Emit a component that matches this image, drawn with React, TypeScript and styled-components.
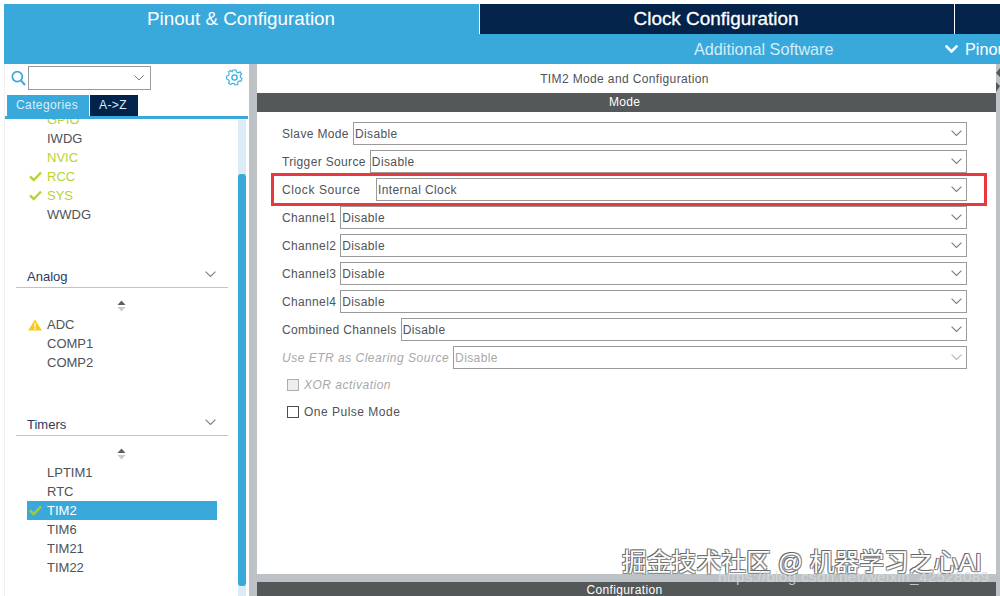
import React from 'react';
import styled, { createGlobalStyle } from 'styled-components';

const GlobalStyle = createGlobalStyle`
  html, body {
    margin: 0;
    padding: 0;
    background: #fff;
  }
  body {
    font-family: "Liberation Sans", Arial, sans-serif;
    overflow: hidden;
  }
`;

const Page = styled.div`
  position: relative;
  width: 1000px;
  height: 596px;
  overflow: hidden;
  padding: 4px 0 0 4px;
  box-sizing: border-box;
  display: flex;
  flex-direction: column;
`;

const TopTabs = styled.div`
  display: flex;
  height: 30px;
  flex: none;
`;

const TopTab = styled.div<{ $active?: boolean; $width: number }>`
  width: ${(p) => p.$width}px;
  flex: none;
  box-sizing: border-box;
  background: ${(p) => (p.$active ? '#39a9dc' : '#03234b')};
  color: #fff;
  border-left: ${(p) => (p.$active ? '0' : '1px solid #fff')};
  font-size: ${(p) => (p.$active ? 18.8 : 18.9)}px;
  line-height: 30px;
  text-align: center;
  white-space: nowrap;
  padding-right: ${(p) => (p.$active ? 1 : 2)}px;
  -webkit-text-stroke: ${(p) => (p.$active ? '0' : '0.3px #fff')};
`;

const SubBar = styled.div`
  height: 30px;
  flex: none;
  background: #39a9dc;
  color: #d4edf8;
  display: flex;
  align-items: center;
  font-size: 16.2px;
  white-space: nowrap;
  overflow: hidden;
`;

const SubItem = styled.div`
  margin-left: 690px;
  width: 251px;
  flex: none;
`;

const PinoutMenu = styled.div`
  display: flex;
  align-items: center;
  gap: 7px;
  color: #fff;
  flex: none;
`;

const Body = styled.div`
  flex: 1;
  display: flex;
  min-height: 0;
`;

const Sidebar = styled.div`
  width: 245px;
  flex: none;
  display: flex;
  flex-direction: column;
  box-sizing: border-box;
  border-left: 1px solid #eef0f1;
`;

const SearchRow = styled.div`
  height: 31px;
  flex: none;
  display: flex;
  align-items: flex-start;
  padding: 2px 6px 0 6px;
  box-sizing: border-box;
`;

const SearchIconSlot = styled.span`
  margin-top: 4px;
  display: flex;
`;

const GearSlot = styled.span`
  margin-top: 3px;
  display: flex;
`;

const SearchBox = styled.div`
  width: 123px;
  height: 24px;
  margin-left: 2px;
  box-sizing: border-box;
  border: 1px solid #9a9a9a;
  display: flex;
  align-items: center;
  justify-content: flex-end;
  padding-right: 6px;
  margin-right: auto;
`;

const CategoryTabs = styled.div`
  display: flex;
  gap: 1px;
  padding-left: 2px;
  height: 21px;
  flex: none;
`;

const CategoryTab = styled.div<{ $active?: boolean }>`
  padding: 0 11px 0 9px;
  background: ${(p) => (p.$active ? '#39a9dc' : '#03234b')};
  color: #d9eef8;
  font-size: 12px;
  line-height: 21px;
  letter-spacing: 0.4px;
`;

const BlueRule = styled.div`
  height: 3px;
  flex: none;
  margin-right: 1px;
  background: #39a9dc;
`;

const ListArea = styled.div`
  flex: 1;
  position: relative;
  display: flex;
  min-height: 0;
  overflow: hidden;
`;

const ListColumn = styled.div`
  flex: 1;
  min-width: 0;
  padding: 0 0 0 11px;
  margin-top: -9px;
`;

const ScrollTrack = styled.div`
  width: 8px;
  flex: none;
  margin: 1px 3px 0 0;
  background: #dcecf6;
  padding-top: 54px;
  box-sizing: border-box;
`;

const ScrollThumb = styled.div`
  height: 412px;
  border-radius: 3px;
  background: #39a9dc;
`;

const ItemList = styled.div<{ $gapAfter?: number }>`
  padding-left: 11px;
  margin-bottom: ${(p) => p.$gapAfter ?? 0}px;
`;

const Item = styled.div<{ $tone?: 'lime' | 'selected' }>`
  height: 19px;
  width: 190px;
  display: flex;
  align-items: center;
  font-size: 13px;
  background: ${(p) => (p.$tone === 'selected' ? '#39a9dc' : 'transparent')};
  color: ${(p) =>
    p.$tone === 'lime' ? '#b8d432' : p.$tone === 'selected' ? '#fff' : '#4f5257'};
`;

const ItemIcon = styled.span`
  width: 20px;
  flex: none;
  display: flex;
  justify-content: flex-end;
  padding-right: 5px;
  box-sizing: border-box;
`;

const GroupHeader = styled.div`
  width: 212px;
  height: 22px;
  box-sizing: border-box;
  border-bottom: 1px solid #c0c4c7;
  padding: 0 12px 0 11px;
  display: flex;
  align-items: center;
  justify-content: space-between;
  color: #2c3a5c;
  font-size: 13px;
`;

const GroupChevron = styled.span`
  display: flex;
  margin-bottom: 4px;
`;

const Sorter = styled.div`
  width: 188px;
  margin: 12px 0 3px 11px;
  height: 12px;
  display: flex;
  justify-content: center;
`;

const Divider = styled.div`
  width: 8px;
  flex: none;
  background: #bcc2c6;
`;

const Main = styled.div`
  flex: 1;
  display: flex;
  flex-direction: column;
  min-width: 0;
`;

const MainTitle = styled.div`
  height: 29px;
  flex: none;
  font-size: 12px;
  letter-spacing: 0.37px;
  padding: 1px 4px 0 0;
  box-sizing: border-box;
  color: #4f5257;
  text-align: center;
  line-height: 28px;
`;

const DarkBar = styled.div`
  height: 19px;
  flex: none;
  background: #555859;
  color: #fff;
  font-size: 12px;
  letter-spacing: 0.3px;
  line-height: 19px;
  text-align: center;
  padding-right: 4px;
`;

const Form = styled.div`
  flex: 1;
  padding: 10px 29px 0 25px;
  display: flex;
  flex-direction: column;
  gap: 5px;
  min-height: 0;
`;

const Row = styled.div<{ $disabled?: boolean }>`
  height: 23px;
  flex: none;
  display: flex;
  align-items: center;
  font-size: 12px;
  color: ${(p) => (p.$disabled ? '#a8a8a8' : '#4f5257')};
  font-style: ${(p) => (p.$disabled ? 'italic' : 'normal')};
  white-space: nowrap;
`;

const Label = styled.span<{ $width?: number; $spacing?: number }>`
  flex: none;
  width: ${(p) => (p.$width ? `${p.$width}px` : 'auto')};
  margin-right: 4px;
  letter-spacing: ${(p) => p.$spacing ?? 0.35}px;
`;

const SelectBox = styled.div<{ $disabled?: boolean }>`
  flex: 1;
  height: 23px;
  box-sizing: border-box;
  border: 1px solid #9a9a9a;
  display: flex;
  align-items: center;
  justify-content: space-between;
  padding: 0 4px 0 1px;
  font-style: normal;
  letter-spacing: 0.4px;
  color: ${(p) => (p.$disabled ? '#a8a8a8' : '#4f5257')};
`;

const CheckRow = styled.div<{ $disabled?: boolean }>`
  height: 22px;
  flex: none;
  display: flex;
  align-items: center;
  gap: 5px;
  padding-left: 5px;
  font-size: 12px;
  letter-spacing: 0.5px;
  color: ${(p) => (p.$disabled ? '#a8a8a8' : '#4f5257')};
  font-style: ${(p) => (p.$disabled ? 'italic' : 'normal')};
`;

const CheckBox = styled.span<{ $disabled?: boolean }>`
  width: 12px;
  height: 12px;
  box-sizing: border-box;
  flex: none;
  border: 1px solid ${(p) => (p.$disabled ? '#adadad' : '#4a4a4a')};
  background: ${(p) => (p.$disabled ? '#eeeeee' : '#fff')};
`;

const ConfigStrip = styled.div`
  flex: none;
  background: #bcc2c6;
  padding-top: 8px;
`;

const ConfigBar = styled(DarkBar)`
  height: 14px;
  line-height: 17px;
  letter-spacing: 0.35px;
`;

const EdgeBar = styled.div`
  width: 4px;
  flex: none;
  background: #bcc2c6;
  position: relative;
`;

const EdgeArrows = styled.svg`
  position: absolute;
  left: 0;
  top: 4px;
`;

const Highlight = styled.div`
  position: absolute;
  left: 271px;
  top: 173px;
  width: 716px;
  height: 33px;
  box-sizing: border-box;
  border: 3px solid #e8383d;
  pointer-events: none;
`;

const WatermarkMain = styled.div`
  position: absolute;
  left: 622px;
  top: 548px;
  font-size: 24.8px;
  line-height: 30px;
  color: #fff;
  white-space: nowrap;
  font-family: "Liberation Sans", "Noto Sans CJK SC", sans-serif;
  text-shadow: -1px -1px 0 #666, 1px 1px 0 #888, 1px -1px 0 #888, -1px 1px 0 #888;
`;

const WatermarkUrl = styled.div`
  position: absolute;
  left: 718px;
  top: 568px;
  font-size: 15.3px;
  line-height: 18px;
  letter-spacing: 0.3px;
  color: rgba(215, 218, 220, 0.85);
  white-space: nowrap;
`;

const Chevron = ({ size = 10, color = '#7a7d80', width = 1 }: { size?: number; color?: string; width?: number }) => (
  <svg width={size} height={size * 0.6} viewBox="0 0 10 6" fill="none">
    <path d="M0.5 0.5 L5 5 L9.5 0.5" stroke={color} strokeWidth={width} />
  </svg>
);

const Check = ({ color = '#b8d432' }: { color?: string }) => (
  <svg width="13" height="11" viewBox="0 0 13 11" fill="none">
    <path d="M1 5.5 L4.8 9 L12 1.5" stroke={color} strokeWidth="2.4" />
  </svg>
);

const Warning = () => (
  <svg width="14" height="12" viewBox="0 0 14 12">
    <path d="M7 0.5 L13.8 11.5 H0.2 Z" fill="#fcc917" />
    <rect x="6.3" y="4" width="1.4" height="4.4" fill="#fff" />
    <rect x="6.3" y="9.2" width="1.4" height="1.4" fill="#fff" />
  </svg>
);

const SortArrows = () => (
  <svg width="9" height="12" viewBox="0 0 9 12">
    <path d="M4.5 0.5 L8.5 5 H0.5 Z" fill="#5d6166" />
    <path d="M4.5 11.5 L8.5 7 H0.5 Z" fill="#c6c9cb" />
  </svg>
);

const SearchIcon = () => (
  <svg width="15" height="16" viewBox="0 0 15 16" fill="none">
    <circle cx="6.3" cy="6.6" r="5" stroke="#39a9dc" strokeWidth="1.7" />
    <path d="M10 10.6 L14 15" stroke="#39a9dc" strokeWidth="2" />
  </svg>
);

const GearIcon = () => (
  <svg width="17" height="17" viewBox="0 0 17 17" fill="none">
    <path
      d="M7 1 H10 L10.5 3 L12.3 3.8 L14.1 2.8 L15.6 5 L14.2 6.5 L14.5 8.5 L16 9.6 L15 12.1 L13 12 L11.7 13.5 L11.7 15.5 L9 16 L8.2 14.4 L6.2 14.2 L4.8 15.6 L2.6 14.2 L3.3 12.3 L2.2 10.6 L0.6 10 L0.8 7 L2.7 6.4 L3.3 4.5 L2.4 2.9 L4.6 1.4 L6 2.9 Z"
      stroke="#39a9dc"
      strokeWidth="1.1"
    />
    <circle cx="8.5" cy="8.5" r="2.6" stroke="#39a9dc" strokeWidth="1.3" />
  </svg>
);

const formRows: { label: string; value: string; labelWidth?: number; spacing?: number }[] = [
  { label: 'Slave Mode', value: 'Disable' },
  { label: 'Trigger Source', value: 'Disable' },
  { label: 'Clock Source', value: 'Internal Clock', labelWidth: 90, spacing: 0.6 },
  { label: 'Channel1', value: 'Disable' },
  { label: 'Channel2', value: 'Disable' },
  { label: 'Channel3', value: 'Disable' },
  { label: 'Channel4', value: 'Disable' },
  { label: 'Combined Channels', value: 'Disable' },
];

export default function App() {
  return (
    <Page>
      <GlobalStyle />
      <TopTabs>
        <TopTab $active $width={475}>Pinout &amp; Configuration</TopTab>
        <TopTab $width={475}>Clock Configuration</TopTab>
        <TopTab $width={46} />
      </TopTabs>
      <SubBar>
        <SubItem>Additional Software</SubItem>
        <PinoutMenu>
          <Chevron size={13} color="#fff" width={2} />
          Pinout view
        </PinoutMenu>
      </SubBar>
      <Body>
        <Sidebar>
          <SearchRow>
            <SearchIconSlot><SearchIcon /></SearchIconSlot>
            <SearchBox>
              <Chevron />
            </SearchBox>
            <GearSlot><GearIcon /></GearSlot>
          </SearchRow>
          <CategoryTabs>
            <CategoryTab $active>Categories</CategoryTab>
            <CategoryTab>A-&gt;Z</CategoryTab>
          </CategoryTabs>
          <BlueRule />
          <ListArea>
            <ListColumn>
              <ItemList $gapAfter={42}>
                <Item $tone="lime"><ItemIcon />GPIO</Item>
                <Item><ItemIcon />IWDG</Item>
                <Item $tone="lime"><ItemIcon />NVIC</Item>
                <Item $tone="lime"><ItemIcon><Check /></ItemIcon>RCC</Item>
                <Item $tone="lime"><ItemIcon><Check /></ItemIcon>SYS</Item>
                <Item><ItemIcon />WWDG</Item>
              </ItemList>
              <GroupHeader>Analog<GroupChevron><Chevron size={11} /></GroupChevron></GroupHeader>
              <Sorter><SortArrows /></Sorter>
              <ItemList $gapAfter={42}>
                <Item><ItemIcon><Warning /></ItemIcon>ADC</Item>
                <Item><ItemIcon />COMP1</Item>
                <Item><ItemIcon />COMP2</Item>
              </ItemList>
              <GroupHeader>Timers<GroupChevron><Chevron size={11} /></GroupChevron></GroupHeader>
              <Sorter><SortArrows /></Sorter>
              <ItemList>
                <Item><ItemIcon />LPTIM1</Item>
                <Item><ItemIcon />RTC</Item>
                <Item $tone="selected"><ItemIcon><Check color="#a6c93a" /></ItemIcon>TIM2</Item>
                <Item><ItemIcon />TIM6</Item>
                <Item><ItemIcon />TIM21</Item>
                <Item><ItemIcon />TIM22</Item>
              </ItemList>
            </ListColumn>
            <ScrollTrack>
              <ScrollThumb />
            </ScrollTrack>
          </ListArea>
        </Sidebar>
        <Divider />
        <Main>
          <MainTitle>TIM2 Mode and Configuration</MainTitle>
          <DarkBar>Mode</DarkBar>
          <Form>
            {formRows.map((row) => (
              <Row key={row.label}>
                <Label $width={row.labelWidth} $spacing={row.spacing}>{row.label}</Label>
                <SelectBox>
                  {row.value}
                  <Chevron size={11} />
                </SelectBox>
              </Row>
            ))}
            <Row $disabled>
              <Label $spacing={0.5}>Use ETR as Clearing Source</Label>
              <SelectBox $disabled>
                Disable
                <Chevron size={11} color="#b5b5b5" />
              </SelectBox>
            </Row>
            <CheckRow $disabled>
              <CheckBox $disabled />
              XOR activation
            </CheckRow>
            <CheckRow>
              <CheckBox />
              One Pulse Mode
            </CheckRow>
          </Form>
          <ConfigStrip>
            <ConfigBar>Configuration</ConfigBar>
          </ConfigStrip>
        </Main>
        <EdgeBar>
          <EdgeArrows width="4" height="28" viewBox="0 0 4 28">
            <path d="M4 0 L0 5 L4 9 Z" fill="#555859" />
            <path d="M0 14 L4 18 L0 24 Z" fill="#555859" />
          </EdgeArrows>
        </EdgeBar>
      </Body>
      <Highlight />
      <WatermarkMain>掘金技术社区 @ 机器学习之心AI</WatermarkMain>
      <WatermarkUrl>https://blog.csdn.net/weixin_42528089</WatermarkUrl>
    </Page>
  );
}
